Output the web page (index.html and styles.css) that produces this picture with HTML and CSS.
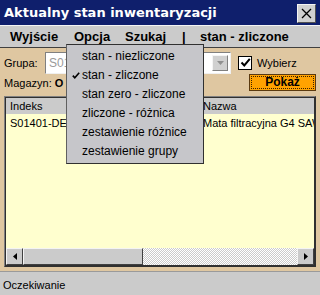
FILE: index.html
```html
<!DOCTYPE html>
<html lang="pl">
<head>
    <meta charset="UTF-8">
    <meta name="viewport" content="width=device-width, initial-scale=1.0">
    <title>Aktualny stan inwentaryzacji</title>
    <link rel="stylesheet" href="styles.css">
</head>
<body>
    <div class="window">
        <div class="titlebar">
            <span class="title">Aktualny stan inwentaryzacji</span>
            <span class="close">
                <svg width="11" height="11" viewBox="0 0 11 11"><path d="M1 1L10 10M10 1L1 10" stroke="#000" stroke-width="1.3"/></svg>
            </span>
        </div>

        <div class="menubar">
            <span class="menu-item w1">Wyjście</span>
            <span class="menu-item w2">Opcja</span>
            <span class="menu-item w3">Szukaj</span>
            <span class="menu-item w4">|</span>
            <span class="menu-item">stan - zliczone</span>
        </div>

        <div class="content">
            <div class="row">
                <span class="label">Grupa:</span>
                <div class="combo">
                    <span class="combo-text">S01</span>
                    <span class="combo-btn">
                        <svg width="7" height="4" viewBox="0 0 7 4"><path d="M0 0H7L3.5 4Z" fill="#909090"/></svg>
                    </span>
                </div>
                <span class="check">
                    <span class="box">
                        <svg width="11" height="11" viewBox="0 0 11 11"><path d="M1.5 5.5L4.3 8.5L9.8 1.8" fill="none" stroke="#000" stroke-width="2"/></svg>
                    </span>
                    Wybierz
                </span>
            </div>
            <div class="row row2">
                <span class="label">Magazyn: <b>O</b></span>
                <button class="btn-show">Pokaż</button>
            </div>

            <div class="list">
                <div class="list-head">
                    <span class="col-idx">Indeks</span>
                    <span class="col-name">Nazwa</span>
                </div>
                <div class="list-row">
                    <span class="col-idx">S01401-DEMO</span>
                    <span class="col-name">Mata filtracyjna G4 SAW</span>
                </div>
                <div class="list-body"></div>
                <div class="hscroll">
                    <span class="arrow">
                        <svg width="4" height="7" viewBox="0 0 4 7"><path d="M4 0V7L0 3.5Z" fill="#000"/></svg>
                    </span>
                    <span class="thumb"></span>
                    <span class="track"></span>
                    <span class="arrow">
                        <svg width="4" height="7" viewBox="0 0 4 7"><path d="M0 0V7L4 3.5Z" fill="#000"/></svg>
                    </span>
                </div>
            </div>
        </div>

        <div class="statusbar">Oczekiwanie</div>

        <ul class="dropdown">
            <li>stan - niezliczone</li>
            <li class="checked">
                <svg class="tick" width="8" height="7" viewBox="0 0 8 7"><path d="M0.8 3.6L2.8 5.8L7.2 0.8" fill="none" stroke="#000" stroke-width="1.6"/></svg>
                stan - zliczone
            </li>
            <li>stan zero - zliczone</li>
            <li>zliczone - różnica</li>
            <li>zestawienie różnice</li>
            <li>zestawienie grupy</li>
        </ul>
    </div>
</body>
</html>
```

FILE: styles.css
```css
body {
    margin: 0;
    font-family: "Liberation Sans", Arial, sans-serif;
    font-size: 11px;
}
.window {
    position: relative;
    width: 320px;
    height: 295px;
    display: flex;
    flex-direction: column;
    background-color: #dfc7a1;
    overflow: hidden;
}
.titlebar {
    height: 25px;
    box-sizing: border-box;
    background-color: #0f1f6c;
    color: white;
    display: flex;
    align-items: center;
    justify-content: space-between;
    padding: 0 4px 0 4px;
}
.title {
    font-family: "DejaVu Sans", sans-serif;
    font-weight: bold;
    font-size: 13px;
}
.close {
    width: 19px;
    height: 19px;
    box-sizing: border-box;
    background-color: #d0d0d0;
    border: 1px solid #f4f4f4;
    border-right-color: #505050;
    border-bottom-color: #505050;
    display: flex;
    justify-content: center;
    align-items: center;
    margin-top: 1px;
}
.menubar {
    height: 23px;
    box-sizing: border-box;
    background-color: #cbcbcb;
    border-top: 1px solid #f4f4f4;
    border-bottom: 1px solid #404040;
    display: flex;
    align-items: center;
    padding-left: 10px;
    font-weight: bold;
    font-size: 13px;
    white-space: nowrap;
}
.w1 { width: 64px; }
.w2 { width: 51px; }
.w3 { width: 57px; }
.w4 { width: 18px; }
.content {
    flex: 1;
    padding: 4px 4px 4px 4px;
    display: flex;
    flex-direction: column;
}
.row {
    display: flex;
    align-items: center;
    height: 21px;
}
.label {
    width: 41px;
}
.combo {
    width: 186px;
    height: 22px;
    background: white;
    border: 1px solid #808080;
    border-right-color: #f0f0f0;
    border-bottom-color: #f0f0f0;
    display: flex;
    align-items: center;
    justify-content: space-between;
    box-sizing: border-box;
}
.combo-text {
    color: #9a9a9a;
    padding-left: 3px;
    font-size: 12px;
}
.combo-btn {
    width: 16px;
    height: 16px;
    margin-right: 2px;
    box-sizing: border-box;
    background-color: #d0d0d0;
    border: 1px solid #f4f4f4;
    border-right-color: #808080;
    border-bottom-color: #808080;
    display: flex;
    justify-content: center;
    align-items: center;
}
.check {
    margin-left: 7px;
    display: flex;
    align-items: center;
    gap: 5px;
}
.box {
    width: 14px;
    height: 14px;
    box-sizing: border-box;
    background: white;
    border: 1px solid #000;
    display: flex;
    justify-content: center;
    align-items: center;
}
.row2 {
    justify-content: space-between;
    height: 19px;
}
.row2 .label {
    width: auto;
}
.btn-show {
    width: 67px;
    height: 17px;
    margin-top: -1px;
    background-color: #ffa200;
    border: 1px solid #5a3a10;
    outline: 1px dotted #3a2000;
    outline-offset: -3px;
    font-family: inherit;
    font-weight: bold;
    font-size: 12px;
    padding: 0;
}
.list {
    flex: 1;
    margin-top: 4px;
    border: 1px solid #808080;
    border-right-color: #303030;
    border-bottom-color: #303030;
    box-shadow: inset 1px 1px #303030, inset -1px -1px #303030;
    padding: 1px;
    background-color: #ffffcf;
    display: flex;
    flex-direction: column;
}
.list-head {
    height: 16px;
    background-color: #cbcbcb;
    display: flex;
    align-items: center;
}
.list-row {
    height: 17px;
    display: flex;
    align-items: center;
}
.col-idx {
    width: 193px;
    padding-left: 4px;
    overflow: hidden;
    white-space: nowrap;
}
.col-name {
    flex: 1;
    overflow: hidden;
    white-space: nowrap;
}
.list-body {
    flex: 1;
}
.hscroll {
    height: 17px;
    display: flex;
}
.arrow {
    width: 17px;
    background-color: #cbcbcb;
    border: 1px solid #f4f4f4;
    border-right-color: #404040;
    border-bottom-color: #404040;
    box-sizing: border-box;
    display: flex;
    justify-content: center;
    align-items: center;
}
.thumb {
    width: 120px;
    background-color: #cbcbcb;
    border: 1px solid #f4f4f4;
    border-right-color: #404040;
    border-bottom-color: #404040;
    box-sizing: border-box;
}
.track {
    flex: 1;
    background: repeating-conic-gradient(#ffffff 0 25%, #cbcbcb 0 50%) 0 0 / 2px 2px;
}
.statusbar {
    height: 24px;
    box-sizing: border-box;
    background-color: #cbcbcb;
    border-top: 1px solid #9a9a9a;
    display: flex;
    align-items: center;
    padding-left: 3px;
    padding-top: 2px;
}
.dropdown {
    position: absolute;
    left: 66px;
    top: 44px;
    width: 138px;
    box-sizing: border-box;
    margin: 0;
    padding: 2px 0 2px 0;
    list-style: none;
    background-color: #c6c6ca;
    border: 1px solid #303030;
    border-left-color: #606060;
    font-size: 12px;
    white-space: nowrap;
}
.dropdown li {
    height: 19px;
    line-height: 19px;
    padding-left: 15px;
    position: relative;
}
.tick {
    position: absolute;
    left: 5px;
    top: 6px;
}
```
